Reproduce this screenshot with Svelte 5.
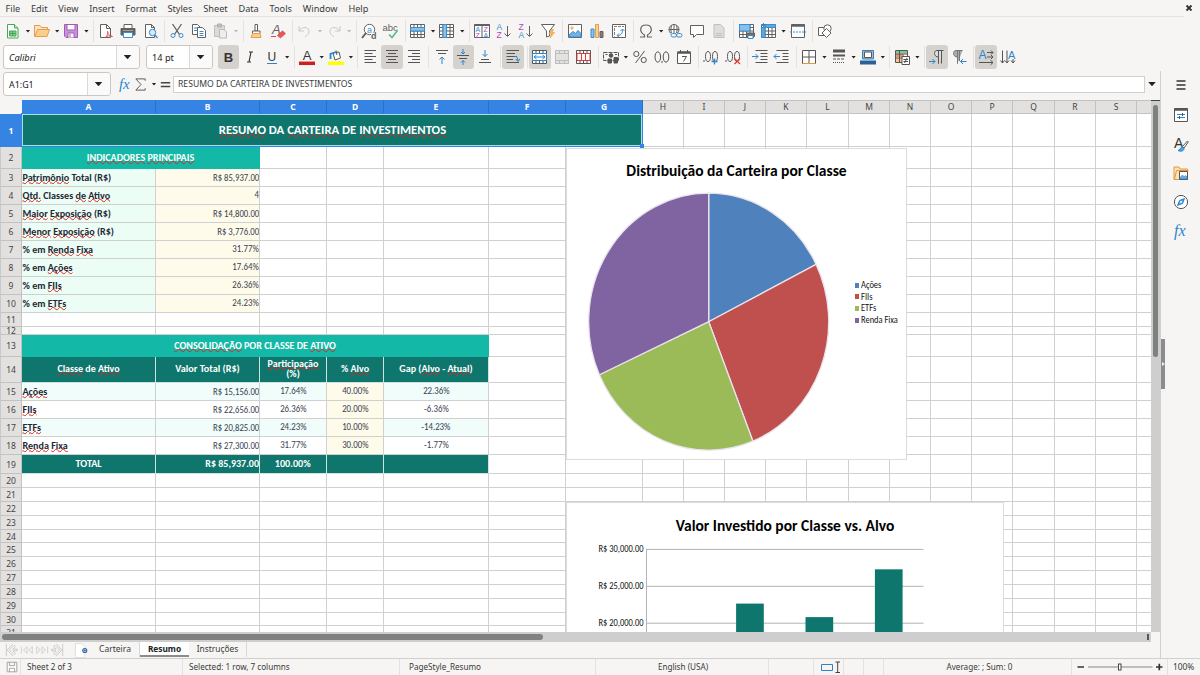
<script>
const menus = ['File', 'Edit', 'View', 'Insert', 'Format', 'Styles', 'Sheet', 'Data', 'Tools', 'Window', 'Help'];

// stroke colours
const K = '#555';
const B = '#2a85cf';

const lines = (list, color = K) =>
  list.map(([x1, x2, y]) => `<path d="M${x1} ${y}H${x2}" stroke="${color}"/>`).join('');
const letter = (t, x, y, size, color, extra = '') =>
  `<text x="${x}" y="${y}" font-size="${size}" fill="${color}" stroke="none" ${extra}>${t}</text>`;
const tableBase = `<path d="M.5 1.5H14.5V14.5H.5Z" fill="#fff"/><path d="M.5 4.5H14.5M.5 8H14.5M.5 11.5H14.5M4 1.5V14.5M7.5 1.5V14.5M11 1.5V14.5"/>`;
const page = `<path d="M3.5 1.5H9.5L12.5 4.5V14.5H3.5Z" fill="#fff"/><path d="M9.5 1.5V4.5H12.5"/>`;

const icons = {
  new: `<path d="M2.5 1.5H9.5L13 5V15H2.5Z" fill="#fff" stroke="#36a34a"/><path d="M9.5 1.5V5H13" fill="#bfe5c5" stroke="#36a34a"/><path d="M4.5 8H11V13H4.5ZM4.5 10.5H11M7.7 8V13" fill="#7cc98a" stroke="#36a34a"/>`,
  open: `<path d="M.5 13.5V2.5H6L7.5 4.5H13.5V7" fill="#fbe3bf" stroke="#e8963a"/><path d="M.8 13.5L3.5 6.5H15.5L13 13.5Z" fill="#fbcb84" stroke="#e8963a"/>`,
  save: `<path d="M1.5 1.5H14.5V14.5H3L1.5 13Z" fill="#c58ad6" stroke="#9a4fb0"/><path d="M4 1.5H12V7H4Z" fill="#fff" stroke="#9a4fb0"/><path d="M5 14.5V10H11V14.5" fill="#fff" stroke="#9a4fb0"/><path d="M7 11V14" stroke="#9a4fb0"/>`,
  pdf: `<path d="M2.5 1.5H8.5L12.5 5.5V14.5H2.5Z" fill="#fff"/><path d="M8.5 1.5V5.5H12.5"/><path d="M7.5 14.5C9.5 12.5 10.5 9 9.7 8.3S9.5 12.5 14.5 13.5C12 12 9 12.8 7.5 14.5Z" stroke="#e03b3b" fill="none" stroke-width=".9"/>`,
  print: `<path d="M4 5V1.5H12V5" fill="#fff"/><path d="M1 5.5H15V12H1Z" fill="#555"/><path d="M3.5 9.5H12.5V14.5H3.5Z" fill="#fff" stroke="${B}"/><path d="M3 7.5H13" stroke="#999"/>`,
  preview: `${page}<circle cx="10.5" cy="9.5" r="3.2" fill="#d5eafa" stroke="${B}"/><path d="M12.7 11.8L15.5 15" stroke="${B}" stroke-width="1.4"/>`,
  cut: `<path d="M3.5 1L10.5 11.5M12.5 1L5.5 11.5" stroke-width="1.3"/><circle cx="4" cy="12.5" r="2" stroke="${B}"/><circle cx="12" cy="12.5" r="2" stroke="${B}"/>`,
  copy: `<path d="M1.5 1.5H6.5L9.5 4.5V11.5H1.5Z" fill="#fff"/><path d="M3 5H7M3 7.5H7" stroke="${B}"/><path d="M6.5 4.5H11.5L14.5 7.5V14.5H6.5Z" fill="#fff"/><path d="M8.5 8.5H12.5M8.5 10.5H12.5M8.5 12.5H12.5" stroke="${B}"/>`,
  paste: `<path d="M1.5 2.5H11.5V13.5H1.5Z" fill="#d8d8d8" stroke="#bbb"/><path d="M4.5 1H8.5V4H4.5Z" fill="#bbb" stroke="#aaa"/><path d="M6.5 6.5H11L13.5 9V15H6.5Z" fill="#eee" stroke="#b5b5b5"/>`,
  clone: `<path d="M7 1.5H9.5V8H7Z" fill="#fff"/><path d="M4.5 8H12V10.5H4.5Z" fill="#fff"/><path d="M4.5 10.5H12L13 14.5H3Z" fill="#fbcb84" stroke="#e8963a"/>`,
  clear: `${letter('A', 2, 11, 13, K, 'font-style="italic"')}<path d="M7.5 12.5L12.5 8L15.3 10.5L10.5 14.8Z" fill="#ef4a4a" stroke="#d93a3a"/><path d="M1 13.5H6" stroke="#d93a3a"/>`,
  undo: `<path d="M2 3V8H7M2 8C5 3 12 3.5 12 8.5C12 11 10 12.5 8 14" stroke="#c4c4c4" fill="none"/>`,
  redo: `<path d="M14 3V8H9M14 8C11 3 4 3.5 4 8.5C4 11 6 12.5 8 14" stroke="#c4c4c4" fill="none"/>`,
  find: `<circle cx="8.5" cy="6.5" r="5.2" fill="#fff"/><path d="M5 10L1 15" stroke-width="2"/>${letter('a', 6, 9.5, 9, B)}<path d="M10 9.5H16V16H10Z" fill="#f6f5f4" stroke="none"/>${letter('d', 10, 15.5, 9, K, 'font-weight="700"')}`,
  spell: `${letter('abc', -.5, 8, 9.5, K, 'font-weight="500"')}<path d="M6 11.5L9 14.5L14.5 7.5" stroke="#42b883" stroke-width="1.5" fill="none"/>`,
  row: `${tableBase}<path d="M.5 4.5H14.5V8H.5Z" fill="#7fbdeb" stroke="${B}"/>`,
  column: `${tableBase}<path d="M4 1.5H7.5V14.5H4Z" fill="#7fbdeb" stroke="${B}"/>`,
  sort: `<path d="M.5 1.5H15.5V14.5H.5ZM8 2V14.5" fill="#fff"/><path d="M.5 2H15.5" stroke-width="2"/>${letter('A', 1.6, 8.7, 7, B)}${letter('Z', 1.6, 14.5, 7, '#a640b8')}${letter('Z', 9.5, 8.7, 7, '#a640b8')}${letter('A', 9.5, 14.5, 7, B)}`,
  asc: `${letter('A', .5, 7, 8.5, B)}${letter('Z', .5, 15, 8.5, '#a640b8')}<path d="M11.5 3V13M8.5 10.5L11.5 13.5L14.5 10.5" fill="none"/>`,
  desc: `${letter('Z', .5, 7, 8.5, '#a640b8')}${letter('A', .5, 15, 8.5, B)}<path d="M11.5 3V13M8.5 10.5L11.5 13.5L14.5 10.5" fill="none"/>`,
  filter: `<path d="M1.5 1.5H14.5L9.5 8V13L6.5 14V8Z" fill="#fff"/><path d="M11.5 6.5L9 11H11.5L10 15L14.5 9.5H12L13.5 6.5Z" fill="#fbb65a" stroke="#e8963a" stroke-width=".7"/>`,
  image: `<path d="M1.5 1.5H14.5V14.5H1.5Z" fill="#fff"/><circle cx="5" cy="5" r="1.3" fill="#fbcb84" stroke="#e8963a" stroke-width=".6"/><path d="M2 14V12L6 8.5L8.5 10.5L11 7.5L14 10.5V14Z" fill="#67afe4" stroke="${B}"/>`,
  chart: `<path d="M2 6H5V14.5H2Z" fill="#7fbdeb" stroke="${B}"/><path d="M6.5 1.5H9.5V14.5H6.5Z" fill="#fbcb84" stroke="#e8963a"/><path d="M11 8.5H14V14.5H11Z" fill="#777" stroke="#555"/>`,
  pivot: `<path d="M1.5 1.5H14.5V14.5H1.5Z" fill="#fff"/><path d="M3 3.5H13M3.5 5V13.5" stroke-dasharray="3 1" stroke="#777"/><path d="M6.5 12.5C10.5 12.5 11.5 10 11.5 6.5M9.5 8L11.5 6L13.5 8M8 10.5L6 12.5L8 14" stroke="${B}" fill="none"/>`,
  omega: `<path d="M2 14H6.5V12C1 9 1.5 2 8 2S15 9 9.5 12V14H14" fill="none" stroke-width="1.2"/>`,
  link: `<circle cx="7" cy="6.5" r="5" fill="#fff"/><path d="M2 6.5H12M7 1.5V11.5M4.5 2.5Q3 6.5 4.5 10.5M9.5 2.5Q11 6.5 9.5 10.5" fill="none"/><path d="M4 10H15.5V15H4Z" fill="#f6f5f4" stroke="none"/><rect x="4" y="10.5" width="5.5" height="3.5" rx="1.7" fill="none" stroke="${B}"/><rect x="9.5" y="10.5" width="5.5" height="3.5" rx="1.7" fill="none" stroke="${B}"/>`,
  comment: `<path d="M1.5 2.5H14.5V11.5H7.5L4.5 14.5V11.5H1.5Z" fill="#fff"/>`,
  headfoot: `<path d="M3 1.5H9.5L13 5V14.5H3Z" fill="#ddd" stroke="#bbb"/><path d="M5 12.5H11M5 10.5H11" stroke="#bbb"/>`,
  printarea: `${tableBase}<path d="M.5 1.5H11V8H.5Z" fill="#7fbdeb" stroke="${B}"/><path d="M7.5 10H15.5V13.5H7.5Z" fill="#666"/><path d="M9 12.5H14V15.5H9Z" fill="#fff" stroke="${B}"/>`,
  freeze: `${tableBase}<path d="M4 1.5H14.5V4.5H4ZM.5 4.5H4V14.5H.5Z" fill="#4ea3e0" stroke="${B}"/><path d="M2.5 0V5M0 2.5H5" stroke="${B}"/>`,
  split: `<path d="M1.5 1.5H14.5V14.5H1.5Z" fill="#fff"/><path d="M1.5 2.5H14.5" stroke-width="2.5"/><path d="M0 9H16" stroke="${B}" stroke-dasharray="2 1"/>`,
  shapes: `<path d="M1.5 4.5H9V12.5H1.5Z" fill="#fff"/><circle cx="10.5" cy="5.5" r="3.7" fill="#fff"/><path d="M9.5 5.5L14 10L9.5 14.5L5 10Z" fill="#fff"/>`,

  bold: letter('B', 3.8, 12.8, 13, '#333', 'font-weight="700"'),
  italic: `<path d="M7 3H11M5 13H9M9 3L7 13" stroke="#333" stroke-width="1.2"/>`,
  underline: `${letter('U', 3.5, 11.5, 12, '#333')}<path d="M3 14.5H13" stroke="${B}"/>`,
  fontcolor: `${letter('A', 3.7, 10.8, 13, '#333')}<path d="M0 14.3H16" stroke="#c9211e" stroke-width="3.5"/>`,
  fill: `<path d="M0 14.3H16" stroke="#ffff00" stroke-width="3.5"/><path d="M5 4L11 3L12.5 9L7 11Z" fill="#fff"/><path d="M8 1.5L9 6"/><path d="M2.5 10V5L8 3" stroke="${B}" stroke-width="1.8" fill="none"/>`,
  left: lines([[1.5, 13, 1.5], [1.5, 9.5, 4.5], [1.5, 13, 7.5], [1.5, 9.5, 10.5], [1.5, 13, 13.5]]),
  center: lines([[2, 14, 1.5], [4, 12, 4.5], [2, 14, 7.5], [4, 12, 10.5], [2, 14, 13.5]]),
  right: lines([[2, 14, 1.5], [6, 14, 4.5], [2, 14, 7.5], [6, 14, 10.5], [2, 14, 13.5]]),
  top: `${lines([[2, 14, 1.5], [4, 12, 4.5]])}<path d="M8 15V8M5.5 10.5L8 8L10.5 10.5" stroke="${B}" fill="none"/>`,
  middle: `${lines([[2, 14, 6.5], [4, 12, 9.5]])}<path d="M8 0V5M6 3L8 5L10 3M8 16V11.5M6 13.5L8 11.5L10 13.5" stroke="${B}" fill="none"/>`,
  bottom: `${lines([[4, 12, 10.5], [2, 14, 13.5]])}<path d="M8 1V7.5M5.5 5L8 7.5L10.5 5" stroke="${B}" fill="none"/>`,
  wrap: `${lines([[1.5, 14, 1.5], [1.5, 10, 4.5], [1.5, 12, 7.5], [1.5, 8, 10.5], [1.5, 14, 13.5]])}<path d="M9 7.5H11Q13 8 13 12M10.8 10L13 12.5L15 10" stroke="${B}" fill="none"/>`,
  mergecenter: `${tableBase}<path d="M.5 4.5H14.5V11.5H.5Z" fill="#fff" stroke="${B}"/><path d="M2 8H13M4.5 6L2 8L4.5 10M10.5 6L13 8L10.5 10" stroke="${B}" fill="none"/>`,
  merge: `<path d="M1.5 1.5H14.5V14.5H1.5ZM1.5 4.5H14.5M1.5 11.5H14.5M5.5 1.5V4.5M10.5 1.5V4.5M5.5 11.5V14.5M10.5 11.5V14.5" fill="#e2e2e2" stroke="#bdbdbd"/>`,
  unmerge: `${tableBase}<path d="M1 4.5H14V11.5H1ZM5.5 4.5V11.5M9.5 4.5V11.5" fill="#fff" stroke="#e03b3b"/>`,
  currency: `<path d="M.5 3.5H15.5V11.5H.5Z" fill="none" stroke-dasharray="4 1"/><circle cx="8" cy="6.5" r="1.8" fill="#555"/><path d="M2.5 5.5H4.5M12 5.5H14"/><path d="M5 10H8.5V14H5ZM11 8.5H14.5V14H11Z" fill="#555"/>`,
  percent: `<circle cx="4.3" cy="5" r="2.6"/><circle cx="11.7" cy="11" r="2.6"/><path d="M12.5 2L3.5 14"/>`,
  decimal: `<ellipse cx="3.8" cy="8" rx="2.8" ry="5.2"/><ellipse cx="12" cy="8" rx="2.8" ry="5.2"/><path d="M8 12V14"/>`,
  date: `<path d="M1.5 3.5H14.5V14.5H1.5Z" fill="#fff"/><path d="M1.5 3.5H14.5" stroke-width="2.5"/><path d="M4.5 1V4M11.5 1V4M6 7.5H10.5L7.5 12.5" fill="none"/>`,
  adddec: `<path d="M1 11V13"/><ellipse cx="5" cy="7.5" rx="2.5" ry="5"/><ellipse cx="12" cy="7.5" rx="2.5" ry="5"/><path d="M8.5 12.5H14.5M11.5 9.5V15.5" stroke="${B}" stroke-width="1.3"/>`,
  deldec: `<path d="M1 11V13"/><ellipse cx="5" cy="7.5" rx="2.5" ry="5"/><ellipse cx="12" cy="7.5" rx="2.5" ry="5"/><path d="M9.5 9.5L15 15M15 9.5L9.5 15" stroke="#e03b3b" stroke-width="1.3"/>`,
  indent: `${lines([[3.5, 15.5, 1.5], [8.5, 15.5, 4.5], [8.5, 15.5, 7.5], [8.5, 15.5, 10.5], [3.5, 15.5, 13.5]])}<path d="M0 7.5H6M3.5 5L6 7.5L3.5 10" stroke="${B}" fill="none"/>`,
  outdent: `${lines([[2.5, 14.5, 1.5], [8.5, 14.5, 4.5], [8.5, 14.5, 7.5], [8.5, 14.5, 10.5], [2.5, 14.5, 13.5]])}<path d="M0 7.5H6M2.5 5L0 7.5L2.5 10" stroke="${B}" fill="none"/>`,
  border: `<path d="M1.5 1.5H14.5V14.5H1.5ZM8 1.5V14.5M1.5 8H14.5" fill="#fff"/><path d="M1.5 14.5H14.5" stroke="#e8963a"/>`,
  borderstyle: `<path d="M2 2H14" stroke-width="3"/><path d="M2 6.5H14" stroke-width="2"/><path d="M2 10H14" stroke-dasharray="3 1"/><path d="M2 13.5H14" stroke-dasharray="1 1"/>`,
  bordercolor: `<path d="M2.5 1.5H13.5V10H2.5Z" stroke="${B}" fill="#b5b5b5"/><path d="M4.5 3H11.5V8.5H4.5Z" fill="#fff"/><path d="M0 13.5H16" stroke="#2a6099" stroke-width="4"/>`,
  conditional: `<path d="M1.5 1.5H13.5V13.5H1.5Z" fill="#fff"/><path d="M2 2H13V4.5H2Z" fill="#6fcf97" stroke="none"/><path d="M2 5H10V8H2Z" fill="#f28b82" stroke="none"/><path d="M2 8.5H8V13H2Z" fill="#fbcb84" stroke="none"/><path d="M1.5 5H13.5M1.5 9H13.5M5.5 1.5V13.5"/><path d="M8 7.5H15.5V15.5H8Z" fill="#fff"/><path d="M9.5 10.5H14M9.5 12.5H14M13 9L10.5 14"/>`,
  ltr: `<path d="M14.5 1.5H8C4.5 1.5 4.5 8 9.5 8V14.5M9.5 1.5V14.5M12.5 1.5V14.5" fill="#ddd"/><path d="M0 12.5H6M3.5 10L6 12.5L3.5 15" stroke="${B}" fill="none"/>`,
  rtl: `<path d="M11.5 1.5H5C1.5 1.5 1.5 8 6.5 8V14.5M6.5 1.5V14.5M8.5 1.5V12" fill="#aaa" stroke="#777"/><path d="M15.5 12.5H9.5M12 10L9.5 12.5L12 15" stroke="${B}" fill="none"/>`,
  texth: `${letter('A', .5, 9.5, 12, B)}<path d="M9 3.5H15M13 1.5L15 3.5L13 5.5M9 8H15M13 6L15 8L13 10M1 13.5H15M12.5 11.2L15 13.5L12.5 15.8" fill="none"/>`,
  textv: `${letter('A', 8, 9.5, 11, B)}<path d="M2.5 1.5V14M.5 11.5L2.5 14L4.5 11.5M7 1.5V14M5 11.5L7 14L9 11.5M13 10V14M11 11.5L13 14L15 11.5" fill="none"/>`,

  properties: `<path d="M1.5 1.5H14.5V14.5H1.5Z" fill="#fff"/><path d="M1.5 2.5H14.5" stroke-width="2.5"/><path d="M4 7.5H12M4 10.5H12" stroke="${B}"/><path d="M9.5 6V9M6.5 9V12" stroke="#555"/>`,
  stylist: `${letter('A', 1, 11.5, 14, '#333')}<path d="M14.5 5L9.5 10.5L11 12L15.3 6Z" fill="#fff"/><path d="M9.5 11C7 11 7.5 14 5 14.5C8 16 11 15 11 12.5Z" fill="#4ea3e0" stroke="${B}"/>`,
  gallery: `<path d="M1 14.5V2H6L7 4H14.5V14.5Z" fill="#fbe3bf" stroke="#e8963a"/><path d="M1.5 14L3.5 5.5H15.5" fill="none" stroke="#e8963a"/><path d="M6.5 6.5H14.5V14.5H6.5Z" fill="#fff"/><path d="M7 14V12.5L9.5 10L11 12L12.5 10.5L14 12V14Z" fill="#67afe4" stroke="${B}" stroke-width=".6"/>`,
  navigator: `<circle cx="8" cy="8" r="6.6" fill="#fff"/><path d="M11.5 4.5L9.5 9.5L4.5 11.5L6.5 6.5Z" fill="#4ea3e0" stroke="${B}"/><circle cx="8" cy="8" r="1" fill="#fff" stroke="none"/>`,
  fx: letter('fx', 1, 12.5, 16, B, 'font-style="italic" font-family="Liberation Serif, serif"'),
  sigma: `<path d="M13 4V2H3L8.5 8L3 14H13V12" fill="none"/>`,
  equals: `<path d="M3 6H13M3 10H13" stroke="#444" stroke-width="1.6"/>`,
  menu: `<path d="M3.5 4H12.5M3.5 8H12.5M3.5 12H12.5" stroke="#333" stroke-width="1.5"/>`,
  disk: `<path d="M2.5 2.5H13.5V13.5H2.5ZM5 2.5V6.5H11V2.5M5 13.5V9.5H11V13.5" fill="#fff" stroke="#9a9a9a"/>`,
  addsheet: `<path d="M1.5 .5H8L11.5 4V15.5H1.5Z" fill="#fff" stroke="#ddd"/><circle cx="11.5" cy="8" r="2.2" stroke="#3465a4" stroke-width="1.1" fill="#dce9f8"/><path d="M11.5 6.8V9.2M10.3 8H12.7" stroke="#3465a4" stroke-width=".9"/>`,
  first: `<path d="M1.5 1V15M2.5 8L9 1M2.5 8L9 15M5 8L10.5 2.5L12 4L9 7H14V9H9L12 12L10.5 13.5Z" fill="none" stroke="#c6c6c6"/>`,
  prev: `<path d="M1.5 4V12M8 4L4 8L8 12ZM14 4L10 8L14 12Z" fill="none" stroke="#cbcbcb"/>`,
  next: `<path d="M14.5 4V12M8 4L12 8L8 12ZM2 4L6 8L2 12Z" fill="none" stroke="#cbcbcb"/>`,
  last: `<path d="M14.5 1V15M13.5 8L7 1M13.5 8L7 15M11 8L5.5 2.5L4 4L7 7H2V9H7L4 12L5.5 13.5Z" fill="none" stroke="#c6c6c6"/>`
};

// '|' is a separator, '+' after a name adds a dropdown, '!' marks it pressed, '-' greys the dropdown
const standardBar = 'new+ open+ save+ | pdf print preview | cut copy paste+- | clone clear | undo+- redo+- | find spell | row+ column+ | sort asc desc filter | image chart pivot | omega+ link comment headfoot | printarea freeze+ split | shapes'.split(' ');
const formatBar = 'bold! italic underline+ | fontcolor+ fill+ | left center! right | top middle! bottom | wrap! | mergecenter! merge unmerge | currency+ percent decimal date | adddec deldec | indent outdent | border+ borderstyle+ bordercolor+ | conditional+ | ltr! rtl | texth! textv'.split(' ');

const columns = [
  ['A', 134], ['B', 104], ['C', 67], ['D', 57], ['E', 105], ['F', 77], ['G', 77], ['H', 41], ['I', 41], ['J', 41],
  ['K', 41], ['L', 42], ['M', 41], ['N', 41], ['O', 41], ['P', 41], ['Q', 42], ['R', 41], ['S', 41], ['', 15]
];
const gridColumns = '22px ' + columns.map(([, w]) => w + 'px').join(' ');

const rowHeights = [33, 22, 18, 18, 18, 18, 18, 18, 18, 18, 14, 8, 22, 26, 18, 18, 18, 18, 19, 14, 14, 14, 14, 13, 14, 14, 14, 14, 14, 13, 14];

// words between underscores are flagged by the spell checker
const cells = {
  1: [['_RESUMO_ DA _CARTEIRA_ DE _INVESTIMENTOS_', 'title', 7]],
  2: [['_INDICADORES_ _PRINCIPAIS_', 'band', 2]],
  3: [['_Patrimônio_ Total (R$)', 'name'], ['R$ 85,937.00', 'cream money']],
  4: [['_Qtd._ Classes _de_ _Ativo_', 'name'], ['4', 'cream num']],
  5: [['_Maior_ _Exposição_ (R$)', 'name'], ['R$ 14,800.00', 'cream money']],
  6: [['_Menor_ _Exposição_ (R$)', 'name'], ['R$ 3,776.00', 'cream money']],
  7: [['% em _Renda_ _Fixa_', 'name'], ['31.77%', 'cream num']],
  8: [['% em _Ações_', 'name'], ['17.64%', 'cream num']],
  9: [['% em _FIIs_', 'name'], ['26.36%', 'cream num']],
  10: [['% em _ETFs_', 'name'], ['24.23%', 'cream num']],
  13: [['_CONSOLIDAÇÃO_ POR CLASSE DE _ATIVO_', 'band', 5]],
  14: [['_Classe_ de _Ativo_', 'head'], ['Valor Total (R$)', 'head wide'], ['_Participação_ (%)', 'head'], ['% _Alvo_', 'head'], ['Gap (_Alvo_ - _Atual_)', 'head']],
  15: [['_Ações_', 'name zebra'], ['R$ 15,156.00', 'zebra money'], ['17.64%', 'zebra mid'], ['40.00%', 'cream mid'], ['22.36%', 'zebra mid']],
  16: [['_FIIs_', 'name plain'], ['R$ 22,656.00', 'money'], ['26.36%', 'mid'], ['20.00%', 'cream mid'], ['-6.36%', 'mid']],
  17: [['_ETFs_', 'name zebra'], ['R$ 20,825.00', 'zebra money'], ['24.23%', 'zebra mid'], ['10.00%', 'cream mid'], ['-14.23%', 'zebra mid']],
  18: [['_Renda_ _Fixa_', 'name plain'], ['R$ 27,300.00', 'money'], ['31.77%', 'mid'], ['30.00%', 'cream mid'], ['-1.77%', 'mid']],
  19: [['TOTAL', 'head wide'], ['R$ 85,937.00', 'head total'], ['100.00%', 'head wide'], ['', 'head'], ['', 'head']]
};

function rowCells(n) {
  const list = (cells[n] || []).map(([text, cls, span = 1]) => ({ text, cls, span }));
  let used = list.reduce((sum, c) => sum + c.span, 0);
  while (used++ < columns.length) list.push({ text: '', cls: '', span: 1 });
  return list;
}

const pie = [
  { name: 'Ações', share: 17.64, color: '#4f81bd' },
  { name: 'FIIs', share: 26.36, color: '#c0504d' },
  { name: 'ETFs', share: 24.23, color: '#9bbb59' },
  { name: 'Renda Fixa', share: 31.77, color: '#8064a2' }
];
const cx = 142.7, cy = 173.7, rx = 120, ry = 128.5;
let start = 0;
const slices = pie.map((p) => {
  const a = start * Math.PI / 50;
  start += p.share;
  const b = start * Math.PI / 50;
  const at = (t) => `${cx + rx * Math.sin(t)} ${cy - ry * Math.cos(t)}`;
  return { ...p, d: `M${cx} ${cy}L${at(a)}A${rx} ${ry} 0 0 1 ${at(b)}Z` };
});

const bars = [15156, 22656, 20825, 27300];
const yFor = (v) => 47.4 + (30000 - v) * 36.9 / 5000;
const ticks = [[30000, 'R$ 30,000.00'], [25000, 'R$ 25,000.00'], [20000, 'R$ 20,000.00']];
</script>

{#snippet icon(name, size = 16)}
  <svg class="icon" width={size} height={size} viewBox="0 0 16 16" fill="none" stroke={K}>{@html icons[name]}</svg>
{/snippet}

{#snippet toolbar(items)}
  {#each items as item}
    {#if item === '|'}
      <span class="sep"></span>
    {:else}
      <button class="tool" class:pressed={item.includes('!')}>{@render icon(item.replace(/[+!-]/g, ''))}</button>
      {#if item.includes('+')}
        <span class="drop" class:grey={item.endsWith('-')}></span>
      {/if}
    {/if}
  {/each}
{/snippet}

{#snippet rich(text)}
  <span class="txt">{#each text.split('_') as part, i}{#if i % 2}<u>{part}</u>{:else}{part}{/if}{/each}</span>
{/snippet}

<div class="app">
  <header class="menubar">
    {#each menus as m}<span>{m}</span>{/each}
    <svg class="close" width="8" height="8" viewBox="0 0 8 8"><path d="M1.5 1.5L6.5 6.5M6.5 1.5L1.5 6.5" stroke="#333" stroke-width="1.8" /></svg>
  </header>
  <div class="bar standard">{@render toolbar(standardBar)}</div>
  <div class="bar format">
    <div class="combo font"><em>Calibri</em><i><b class="drop big"></b></i></div>
    <div class="combo size"><span>14 pt</span><i><b class="drop big"></b></i></div>
    {@render toolbar(formatBar)}
  </div>

  <div class="middle">
    <main>
      <div class="formula">
        <div class="combo ref"><span>A1:G1</span><i><b class="drop big"></b></i></div>
        <div class="fbuttons">
          {@render icon('fx', 15)}
          {@render icon('sigma', 15)}
          <span class="drop"></span>
          {@render icon('equals', 15)}
        </div>
        <div class="input">RESUMO DA CARTEIRA DE INVESTIMENTOS</div>
        <span class="drop big end"></span>
      </div>

      <div class="sheetwrap">
        <div class="sheet">
          <div class="row colhead" style="grid-template-columns: {gridColumns}">
            <span class="corner"></span>
            {#each columns as [name], i}
              <span class:sel={i < 7}>{name}</span>
            {/each}
          </div>
          {#each rowHeights as h, i}
            <div class="row" style="grid-template-columns: {gridColumns}; height: {h}px">
              <span class="rowhead" class:sel={i === 0}>{i + 1}</span>
              {#each rowCells(i + 1) as c}
                <div class="cell {c.cls}" style="grid-column: span {c.span}">
                  {#if c.text}{@render rich(c.text)}{/if}
                </div>
              {/each}
            </div>
          {/each}

          <div class="selection"></div>

          <div class="chart piechart">
            <h2>Distribuição da Carteira por Classe</h2>
            <svg width="340" height="312">
              {#each slices as s}
                <path d={s.d} fill={s.color} stroke="#e9e2ec" stroke-width="1.3" />
              {/each}
            </svg>
            <ul>
              {#each pie as p}
                <li><i style="background: {p.color}"></i><span>{p.name}</span></li>
              {/each}
            </ul>
          </div>

          <div class="chart barchart">
            <h2>Valor Investido por Classe vs. Alvo</h2>
            <svg width="437" height="140">
              {#each ticks as [v, label]}
                <path d="M80 {yFor(v)}H357.5" stroke="#b3b3b3" />
                <text x="77.5" y={yFor(v) + 2.8} text-anchor="end" textLength="45" lengthAdjust="spacingAndGlyphs">{label}</text>
              {/each}
              <path d="M80.5 47V140" stroke="#b3b3b3" />
              {#each bars as v, i}
                <rect x={100.7 + i * 69.4} y={yFor(v)} width="27.7" height="200" fill="#0f766e" />
              {/each}
            </svg>
          </div>
        </div>
        <div class="vscroll"><div class="thumb"></div></div>
      </div>

      <div class="hscroll"><div class="thumb"></div><span></span></div>

      <nav class="tabs">
        <div class="navs">
          {@render icon('first', 14)}{@render icon('prev', 14)}{@render icon('next', 14)}{@render icon('last', 14)}
        </div>
        <div class="add">{@render icon('addsheet', 15)}</div>
        <span class="tab">Carteira</span>
        <span class="tab active">Resumo</span>
        <span class="tab last">Instruções</span>
      </nav>
    </main>

    <aside>
      {#each ['menu', 'properties', 'stylist', 'gallery', 'navigator', 'fx'] as name}
        <button>{@render icon(name)}</button>
      {/each}
      <div class="grip"></div>
    </aside>
  </div>

  <footer class="status">
    <div class="s-disk">{@render icon('disk', 14)}</div>
    <div class="s-sheet">Sheet 2 of 3</div>
    <div class="s-selected">Selected: 1 row, 7 columns</div>
    <div class="s-style">PageStyle_Resumo</div>
    <div class="s-lang">English (USA)</div>
    <div class="s-gap"></div>
    <div class="s-mode">
      <svg width="20" height="12" viewBox="0 0 20 12" fill="none"><path d="M.5 3.5H11.5V9.5H.5Z" stroke={B} /><path d="M14.5 1H19M14.5 11.5H19M16.7 1V11.5" stroke="#444" /></svg>
    </div>
    <div class="s-small"></div>
    <div class="s-small"></div>
    <div class="s-sum">Average: ; Sum: 0</div>
    <div class="s-zoom">
      <svg width="90" height="12" viewBox="0 0 90 12" stroke="#333" fill="none"><path d="M.5 6H7M79 6H85.5M82.3 2.7V9.3" stroke-width="1.7" /><path d="M11 6H75.5" stroke="#aaa" stroke-width="1.5" /><rect x="41.5" y="3" width="2.5" height="6" fill="#fff" stroke="#444" /></svg>
    </div>
    <div class="s-pct">100%</div>
  </footer>
</div>

<style>
  .app {
    width: 1200px;
    height: 675px;
    display: flex;
    flex-direction: column;
    overflow: hidden;
    background: #f6f5f4;
    color: #3a3a3a;
    font-family: 'Noto Sans', sans-serif;
    font-size: 8.5px;
  }

  .app * {
    box-sizing: border-box;
  }

  button {
    border: 0;
    padding: 0;
    background: none;
    display: flex;
    align-items: center;
    justify-content: center;
  }

  .icon {
    display: block;
    flex: none;
    overflow: visible;
  }

  .menubar {
    height: 17px;
    padding-left: 5.5px;
    display: flex;
    align-items: center;
    gap: 10.8px;
    border-bottom: 1px solid #e4e3e1;
    margin-right: 16px;
    font-size: 9.2px;
  }

  .close {
    margin-left: auto;
    margin-right: -9px;
  }

  .bar {
    display: flex;
    align-items: center;
  }

  .standard {
    height: 28px;
    padding-left: 2px;
  }

  .standard .icon {
    opacity: .92;
  }

  .format {
    height: 26px;
    padding: 0 0 2px 2.5px;
  }

  .tool {
    width: 21.95px;
    height: 24px;
    flex: none;
    border-radius: 3px;
  }

  .format .tool {
    width: 21.9px;
  }

  .tool.pressed {
    background: #d5d1cd;
  }

  .sep {
    width: 1px;
    height: 22px;
    flex: none;
    margin: 0 1.2px 0 3.2px;
    background: #e3e2e0;
  }

  .drop {
    width: 5px;
    height: 3px;
    flex: none;
    margin: 0 .8px 0 1.5px;
    background: #222;
    clip-path: polygon(0 0, 100% 0, 50% 100%);
  }

  .drop.grey {
    background: #bbb;
  }

  .drop.big {
    width: 8px;
    height: 4.5px;
    margin: 0;
  }

  .combo {
    height: 24px;
    display: flex;
    align-items: center;
    border: 1px solid #cdc7c2;
    border-radius: 3px;
    background: #fff;
    padding-left: 5.5px;
    color: #222;
    font-size: 9.2px;
  }

  .combo i {
    margin-left: auto;
    width: 23px;
    height: 100%;
    display: flex;
    align-items: center;
    justify-content: center;
    border-left: 1px solid #dcd8d4;
    background: #fafafa;
    border-radius: 0 3px 3px 0;
  }

  .combo.font {
    width: 137px;
    margin-right: 6px;
  }

  .combo.size {
    width: 67px;
    margin-right: 5px;
  }

  .combo.ref {
    width: 108px;
    font-size: 8.9px;
  }

  .middle {
    flex: 1;
    display: flex;
    min-height: 0;
  }

  main {
    width: 1161px;
    display: flex;
    flex-direction: column;
    border-right: 1px solid #d2d0ce;
  }

  .formula {
    height: 29px;
    padding: 0 4px 3px 2.5px;
    display: flex;
    align-items: center;
  }

  .fbuttons {
    width: 62px;
    display: flex;
    align-items: center;
    padding-left: 7px;
  }

  .fbuttons .drop {
    margin: 0 1px 0 4px;
  }

  .input {
    flex: 1;
    height: 17px;
    border: 1px solid #d2d0ce;
    background: #fff;
    padding-left: 4.5px;
    line-height: 15px;
    font-size: 8.65px;
  }

  .end {
    margin-left: 3px !important;
  }

  .sheetwrap {
    height: 532px;
    display: flex;
  }

  .sheet {
    width: 1151px;
    position: relative;
    overflow: hidden;
    background: #fff;
    font-family: Carlito, Lato, sans-serif;
  }

  .row {
    display: grid;
  }

  .colhead {
    height: 14px;
    font-family: 'Noto Sans', sans-serif;
    color: #444;
    text-align: center;
    line-height: 12px;
  }

  .colhead span {
    background: #e2e1e0;
    border-right: 1px solid #c2c2c2;
    border-top: 1px solid #c2c2c2;
    border-bottom: 1px solid #c2c2c2;
  }

  .colhead .corner {
    background: #f6f5f4;
    border: 0;
  }

  .colhead .sel {
    background: #3584e4;
    border-color: #2a6fc4;
    border-top-color: #3584e4;
    border-bottom-color: #3584e4;
    color: #fff;
    font-weight: 700;
  }

  .rowhead {
    display: flex;
    align-items: center;
    justify-content: center;
    background: #e2e1e0;
    border-right: 1px solid #c2c2c2;
    border-bottom: 1px solid #c2c2c2;
    border-left: 1px solid #c9c9c9;
    font-family: 'Noto Sans', sans-serif;
    color: #444;
    line-height: 7px;
    min-height: 0;
  }

  .rowhead.sel {
    background: #3584e4;
    border-color: #3584e4;
    color: #fff;
    font-weight: 700;
  }

  .cell {
    display: flex;
    align-items: center;
    justify-content: center;
    border-right: 1px solid #d0d0d0;
    border-bottom: 1px solid #d0d0d0;
    min-width: 0;
    overflow: hidden;
    color: #374151;
    font-size: 9.6px;
    text-align: center;
    white-space: nowrap;
    padding-bottom: 1px;
  }

  .mid .txt {
    transform: scaleX(.92);
  }

  u {
    text-decoration: underline wavy #e0241b .6px;
    text-underline-offset: -1px;
    text-decoration-skip-ink: none;
  }

  .title {
    background: #0f766e;
    color: #fff;
    font-weight: 700;
    font-size: 12.7px;
    border: 0;
    padding-bottom: 2px;
  }

  .band {
    background: #14b8a6;
    border-color: #14b8a6;
    color: #fff;
    font-weight: 700;
    font-size: 10.1px;
  }

  .name {
    justify-content: flex-start;
    background: #ecfdf5;
    color: #1f2937;
    font-weight: 700;
    font-size: 10.1px;
    padding-left: .5px;
  }

  .zebra {
    background: #f0fdfa;
  }

  .plain {
    background: #fff;
  }

  .cream {
    background: #fffbeb;
  }

  .money,
  .num,
  .total {
    justify-content: flex-end;
    font-size: 10px;
  }

  .money .txt {
    transform: scaleX(.87);
    transform-origin: right;
  }

  .num {
    font-size: 9.6px;
  }

  .num .txt {
    transform: scaleX(.92);
    transform-origin: right;
  }

  .head {
    background: #0f766e;
    border-color: #cfe3e1;
    color: #fff;
    font-weight: 700;
    font-size: 10px;
    line-height: 10px;
    white-space: normal;
  }

  .wide .txt {
    font-size: 10.6px;
    transform: scaleX(.96);
    white-space: nowrap;
  }

  .selection {
    position: absolute;
    left: 21px;
    top: 13px;
    width: 622px;
    height: 34px;
    border: 1px solid #3584e4;
    box-shadow: inset 0 0 0 1px #a9dbe8;
  }

  .selection::after {
    content: '';
    position: absolute;
    right: -2px;
    bottom: -2px;
    width: 4px;
    height: 4px;
    background: #3584e4;
  }

  .chart {
    position: absolute;
    left: 566px;
    background: #fff;
    border: 1px solid #dcdcdc;
  }

  .chart svg {
    position: absolute;
    left: -1px;
    top: -1px;
  }

  .chart h2 {
    margin: 0;
    text-align: center;
    color: #000;
    font-size: 16.6px;
    line-height: 20px;
    font-weight: 700;
    transform: scaleX(.935);
  }

  .piechart {
    top: 48px;
    width: 341px;
    height: 312px;
    padding-top: 11px;
  }

  .barchart {
    top: 402px;
    width: 438px;
    height: 200px;
    padding-top: 12px;
  }

  .barchart text {
    font-size: 9.6px;
    fill: #111;
  }

  .piechart ul {
    position: absolute;
    left: 287.5px;
    top: 130.5px;
    margin: 0;
    padding: 0;
    list-style: none;
    color: #111;
    font-size: 9.6px;
  }

  .piechart li {
    height: 11.6px;
    display: flex;
    align-items: center;
    gap: 2px;
    white-space: nowrap;
  }

  .piechart li span {
    transform: scaleX(.88);
    transform-origin: left;
  }

  .piechart li i {
    width: 4.5px;
    height: 5px;
  }

  .vscroll {
    width: 9px;
    background: #cecece;
    padding: 4px 2px 0;
    border-top: 1px solid #444;
  }

  .vscroll .thumb {
    width: 5px;
    height: 252px;
    border-radius: 3px;
    background: #7f8080;
  }

  .hscroll {
    width: 1151px;
    height: 10px;
    background: #cecece;
    padding: 2px 2px;
    display: flex;
    justify-content: space-between;
  }

  .hscroll .thumb {
    width: 541px;
    height: 6px;
    border-radius: 3px;
    background: #7f8080;
  }

  .hscroll span {
    width: 2px;
    height: 6px;
    background: #555;
  }

  .tabs {
    flex: 1;
    display: flex;
    align-items: stretch;
    line-height: 14px;
  }

  .navs {
    width: 74px;
    padding-left: 5px;
    display: flex;
    align-items: center;
    gap: 1px;
  }

  .add {
    width: 17px;
    display: flex;
    align-items: center;
  }

  .tab {
    width: 49px;
    text-align: center;
    border-right: 1px solid #d9d8d6;
    height: 15px;
  }

  .tab.active {
    background: #fff;
    border-right: 0;
    border-bottom: 2px solid #8c8c8c;
    font-weight: 700;
    font-size: 8.3px;
    color: #222;
  }

  .tab.last {
    width: 58px;
    font-size: 8.4px;
  }

  aside {
    flex: 1;
    position: relative;
    display: flex;
    flex-direction: column;
    align-items: center;
  }

  aside button {
    width: 28px;
    height: 29px;
  }

  aside button:first-child {
    height: 28px;
    margin-bottom: 1.5px;
  }

  aside .grip {
    position: absolute;
    left: 0;
    top: 268px;
    width: 4px;
    height: 50px;
    background: #8c8c8c;
  }

  aside .grip::after {
    content: '';
    display: block;
    margin: 23px 0 0 1px;
    border: 2px solid transparent;
    border-left: 3px solid #eee;
    width: 0;
    height: 0;
  }

  .status {
    height: 17px;
    display: flex;
    border-top: 1px solid #d2d0ce;
    line-height: 16px;
    font-size: 8.15px;
  }

  .status > div {
    flex: none;
    border-right: 1px solid #e3e2e0;
    white-space: nowrap;
    display: flex;
    align-items: center;
  }

  .s-disk {
    width: 21px;
    padding-left: 5px;
  }

  .s-sheet {
    width: 162px;
    padding-left: 6px;
  }

  .s-selected {
    width: 217px;
    padding-left: 6px;
  }

  .s-style {
    width: 196px;
    padding-left: 9px;
  }

  .s-lang {
    width: 173px;
    padding-left: 2px;
    justify-content: center;
  }

  .s-gap {
    width: 45px;
  }

  .s-mode {
    width: 30px;
    padding-left: 7px;
  }

  .s-small {
    width: 20px;
  }

  .s-sum {
    width: 188px;
    padding-left: 62.5px;
  }

  .s-zoom {
    width: 96px;
    padding-left: 5px;
  }

  .status .s-pct {
    padding-left: 5px;
    border: 0;
    font-size: 8.4px;
  }
</style>
